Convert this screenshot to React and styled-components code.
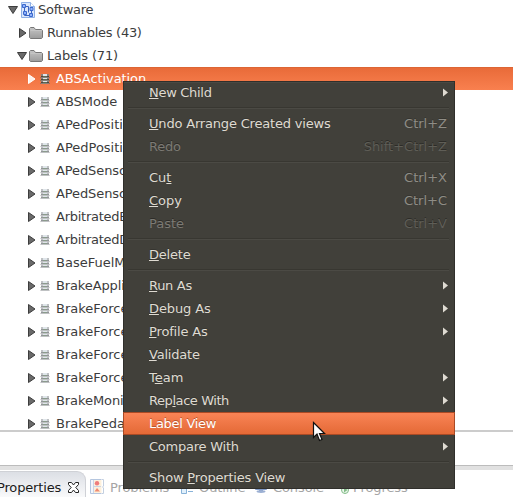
import React from 'react';
import styled, { createGlobalStyle } from 'styled-components';

const GlobalStyle = createGlobalStyle`
  body { margin: 0; background: #fff; overflow: hidden; }
  #root { font: 13px "DejaVu Sans", sans-serif; color: #3c3c3c; }
`;

const Workbench = styled.div`
  position: relative;
  width: 513px;
  height: 497px;
  overflow: hidden;
  display: flex;
  flex-direction: column;
`;

const Tree = styled.div`
  height: 430px;
  flex: none;
  overflow: hidden;
  border-bottom: 2px solid #cccccc;
`;

const TreeRow = styled.div`
  height: 23px;
  margin-top: ${(p) => (p.$first ? '-2px' : 0)};
  padding-left: ${(p) => p.$indent}px;
  display: flex;
  align-items: center;
  white-space: nowrap;
  color: ${(p) => (p.$selected ? '#fff' : '#3c3c3c')};
  background: ${(p) => (p.$selected ? 'linear-gradient(#e86a38, #f9804f)' : 'none')};
  box-shadow: ${(p) => (p.$selected ? 'inset 0 1px #dd6534' : 'none')};
  svg { flex: none; }
`;

const RowLabel = styled.span`
  margin-left: ${(p) => p.$gap}px;
  line-height: 23px;
  letter-spacing: ${(p) => p.$spacing || 0}px;
`;

const IconSlot = styled.span`
  display: flex;
  margin-left: ${(p) => p.$gap}px;
`;

const Blank = styled.div`
  height: 33px;
  flex: none;
`;

const TabFolder = styled.div`
  flex: 1;
  display: flex;
  border-top: 1px solid #bcbcbc;
  padding-top: 5px;
  background: linear-gradient(#e1e1e1 4px, #fff 4px);
`;

const ActiveTab = styled.div`
  width: 86px;
  height: 36px;
  flex: none;
  box-sizing: border-box;
  border: 1px solid #cfd1d6;
  border-width: 1px 1px 0 0;
  border-radius: 0 9px 0 0;
  background: linear-gradient(#dcdfe5, #ffffff 30px);
  color: #1a1a1a;
  display: flex;
  line-height: 32px;
`;

const ActiveTitle = styled.span`
  margin-left: -3px;
  width: 71px;
  letter-spacing: -0.15px;
`;

const CloseSlot = styled.span`
  padding-top: 10px;
  display: flex;
`;

const Tab = styled.div`
  width: ${(p) => p.$width}px;
  flex: none;
  display: flex;
  gap: ${(p) => p.$gap}px;
  padding-left: ${(p) => p.$pad}px;
  line-height: 33px;
  letter-spacing: -0.1px;
  color: #a5a5a5;
  box-sizing: border-box;
  svg { margin-top: 8px; flex: none; }
`;

const Menu = styled.div`
  position: absolute;
  left: 123px;
  top: 81px;
  width: 332px;
  height: 408px;
  background: #41403a;
  box-shadow: inset 0 0 0 1px #302f2b, inset 0 2px #4a4943;
  color: #dfdbd2;
`;

const MenuItem = styled.div`
  height: 23px;
  box-sizing: border-box;
  padding: 0 7px 0 26px;
  display: flex;
  align-items: center;
  justify-content: space-between;
  line-height: 23px;
  white-space: nowrap;
  color: ${(p) => (p.$disabled ? '#7c7a74' : p.$selected ? '#fff' : '#dfdbd2')};
  text-shadow: ${(p) => (p.$disabled ? '0 -1px #2d2c28' : p.$selected ? '0 -1px #b9562f' : '0 -1px #363530')};
  background: ${(p) => (p.$selected ? 'linear-gradient(#fa8557, #e36835)' : 'none')};
  box-shadow: ${(p) => (p.$selected ? 'inset 0 0 0 1px #aa4a25' : 'none')};
`;

const ItemText = styled.span`
  letter-spacing: ${(p) => p.$spacing || 0}px;
`;

const Shortcut = styled.span`
  margin-right: 1px;
  color: ${(p) => (p.$disabled ? '#5f5e57' : '#8f8d86')};
`;

const Mnemonic = styled.span`
  text-decoration: underline;
  text-decoration-thickness: 1px;
  text-underline-offset: 1px;
  text-decoration-skip-ink: none;
`;

const Separator = styled.div`
  height: 8px;
  margin: 0 6px 0 5px;
  box-sizing: border-box;
  padding-top: 3px;
  &::before {
    content: '';
    display: block;
    height: 1px;
    background: #383731;
    border-bottom: 1px solid #4b4a44;
  }
`;

const Pointer = styled.svg`
  position: absolute;
  left: 312px;
  top: 421px;
`;

const Arrow = ({ open, selected }) => (
  <svg width="12" height="12" viewBox="0 0 12 12">
    <path
      d={open ? 'M1.5 2.5H10.5L6 9.5Z' : 'M2.5 1.5V10.5L9 6Z'}
      fill={selected ? '#fff0e8' : '#6a6a6a'}
      stroke={selected ? '#fff' : '#3d3d3d'}
      strokeWidth="1"
    />
  </svg>
);

const FolderIcon = () => (
  <svg width="14" height="12" viewBox="0 0 14 12">
    <defs>
      <linearGradient id="folder" x2="0" y2="1">
        <stop stopColor="#c5c5c5" />
        <stop offset="1" stopColor="#9c9c9c" />
      </linearGradient>
    </defs>
    <path d="M.5 10.5V1.5L1.5.5H5L6.5 2.5H12.5L13.5 3.5V10.5L12.5 11.5H1.5Z" fill="url(#folder)" stroke="#777" />
    <path d="M1.5 3.5H12.5" stroke="#c4c4c4" />
  </svg>
);

const LabelIcon = ({ selected }) => (
  <svg width="10" height="10" viewBox="0 0 10 10" shapeRendering="crispEdges">
    <path d="M1 0H9V10H1Z" fill={selected ? '#8b8078' : '#bfc1c3'} />
    <path d="M3 0H7V2H3ZM3 4H7V5H3ZM3 7H7V8H3Z" fill="#dfe5ea" />
    <path d="M3 2H7V3H3ZM3 5H7V6H3ZM3 8H7V9H3Z" fill={selected ? '#5c6b52' : '#8b9c8c'} />
    <path d="M1 2H3V3H1ZM7 2H9V3H7ZM1 5H3V6H1ZM7 5H9V6H7ZM1 8H3V9H1ZM7 8H9V9H7Z" fill={selected ? '#4d4542' : '#93949a'} />
    <path d="M0 3H1V4H0ZM9 3H10V4H9ZM0 6H1V7H0ZM9 6H10V7H9ZM0 9H1V10H0ZM9 9H10V10H9Z" fill={selected ? '#a9694d' : '#dadada'} />
  </svg>
);

const SoftwareIcon = () => (
  <svg width="14" height="16" viewBox="0 0 14 16">
    <path d="M.5.5H9.5L13.5 4.5V15.5H.5Z" fill="#dbe7fb" stroke="#8fb0e6" />
    <path d="M9.5.5V4.5H13.5" fill="#fff" stroke="#8fb0e6" />
    <path d="M3.5 5V13.5H8M4 4.5H7.5V10.5M10.5 8V13" fill="none" stroke="#3a62c0" />
    <path d="M1.5 2.5H4.5V5.5H1.5ZM9 5.5H12V8.5H9ZM2.5 9.5H5.5V12.5H2.5ZM8.5 11.5H11.5V14.5H8.5Z" fill="#8fb2fa" stroke="#3c69cd" />
  </svg>
);

const CloseIcon = () => (
  <svg width="11" height="11" viewBox="0 0 11 11">
    <path d="M.5.5H3.5L5.5 3L7.5.5H10.5V2.5L7.8 5.5L10.5 8.5V10.5H7.5L5.5 8L3.5 10.5H.5V8.5L3.2 5.5L.5 2.5Z" fill="#fff" stroke="#222" />
  </svg>
);

const ProblemsIcon = () => (
  <svg width="14" height="15" viewBox="0 0 14 15">
    <path d="M.5.5H11V14.5H.5Z" fill="#f3f6fc" stroke="#b5c6df" />
    <path d="M4 1H12.5V14H4Z" fill="#fdf0dc" />
    <path d="M11.5.5H13.5V7L12.5 8L13.5 9V14.5H11.5" fill="#fff" stroke="#c3cfe0" />
    <path d="M3.5 1V14M4 7.5H11" stroke="#c9d5e6" />
    <circle cx="7" cy="4.3" r="2.2" fill="#ee7d7d" />
    <path d="M4.5 12.5L7 9L10 12.5Z" fill="#ef8a70" />
  </svg>
);

const OutlineIcon = () => (
  <svg width="14" height="15" viewBox="0 0 14 15">
    <path d="M1.5 9.5H6.5V14.5H1.5ZM1.5 1.5H6.5V6.5H1.5Z" fill="#e1f0fb" stroke="#88b2d8" />
    <path d="M8 12.5H13M8 4.5H13" stroke="#88b2d8" />
  </svg>
);

const ConsoleIcon = () => (
  <svg width="14" height="15" viewBox="0 0 14 15">
    <path d="M1.5 1.5H12.5V10.5H1.5Z" fill="#b4c5e4" stroke="#829bc8" />
    <path d="M5 10H9V12H5Z" fill="#829bc8" />
    <ellipse cx="7" cy="12.6" rx="4.5" ry="1.3" fill="#9cb0d3" />
  </svg>
);

const ProgressIcon = () => (
  <svg width="10" height="16" viewBox="0 0 10 16">
    <circle cx="5" cy="11" r="3.5" fill="#edf7ed" stroke="#84bd8a" />
    <path d="M4 8.5V13.5L7.5 11Z" fill="#84bd8a" />
  </svg>
);

const SubmenuArrow = () => (
  <svg width="5" height="9" viewBox="0 0 5 9">
    <path d="M0 .5V8.5L5 4.5Z" fill="#dfdbd2" />
  </svg>
);

const labels = [
  ['ABSActivation', -0.08], ['ABSMode'], ['APedPosition'], ['APedPosition'], ['APedSensor', -0.1],
  ['APedSensor', -0.1], ['ArbitratedBrake', -0.25], ['ArbitratedDiff', -0.25], ['BaseFuelMass'],
  ['BrakeApplication', -0.12], ['BrakeForce'], ['BrakeForce'], ['BrakeForce'], ['BrakeForce'],
  ['BrakeMonitor', -0.08], ['BrakePedal'],
];

// An underscore marks the mnemonic letter; null is a separator.
const menu = [
  { text: '_New Child', sub: true, spacing: -0.3 }, null,
  { text: '_Undo Arrange Created views', keys: 'Ctrl+Z', spacing: -0.18 },
  { text: 'Redo', keys: 'Shift+Ctrl+Z', disabled: true, spacing: -0.2 }, null,
  { text: 'Cu_t', keys: 'Ctrl+X' },
  { text: '_Copy', keys: 'Ctrl+C' },
  { text: 'Paste', keys: 'Ctrl+V', disabled: true }, null,
  { text: '_Delete', spacing: -0.2 }, null,
  { text: '_Run As', sub: true, spacing: -0.3 },
  { text: '_Debug As', sub: true, spacing: -0.12 },
  { text: '_Profile As', sub: true, spacing: -0.15 },
  { text: '_Validate', spacing: -0.2 },
  { text: 'T_eam', sub: true },
  { text: 'Rep_lace With', sub: true, spacing: -0.43 },
  { text: 'Label View', selected: true, spacing: -0.3 },
  { text: 'Compare With', sub: true, spacing: -0.24 }, null,
  { text: 'Show _Properties View', spacing: -0.18 },
];

const MenuText = ({ text, spacing }) => {
  const at = text.indexOf('_');
  if (at < 0) return <ItemText $spacing={spacing}>{text}</ItemText>;
  return (
    <ItemText $spacing={spacing}>
      {text.slice(0, at)}
      <Mnemonic>{text[at + 1]}</Mnemonic>
      {text.slice(at + 2)}
    </ItemText>
  );
};

export default function App() {
  return (
    <>
      <GlobalStyle />
      <Workbench>
        <Tree>
          <TreeRow $first $indent={7}>
            <Arrow open />
            <IconSlot $gap={2}><SoftwareIcon /></IconSlot>
            <RowLabel $gap={3} $spacing={-0.25}>Software</RowLabel>
          </TreeRow>
          <TreeRow $indent={17}>
            <Arrow />
            <IconSlot $gap={0}><FolderIcon /></IconSlot>
            <RowLabel $gap={4} $spacing={-0.28}>Runnables (43)</RowLabel>
          </TreeRow>
          <TreeRow $indent={16}>
            <Arrow open />
            <IconSlot $gap={1}><FolderIcon /></IconSlot>
            <RowLabel $gap={4} $spacing={-0.15}>Labels (71)</RowLabel>
          </TreeRow>
          {labels.map(([name, spacing], i) => (
            <TreeRow key={i} $indent={26} $selected={i === 0}>
              <Arrow selected={i === 0} />
              <IconSlot $gap={2}><LabelIcon selected={i === 0} /></IconSlot>
              <RowLabel $gap={6} $spacing={spacing}>{name}</RowLabel>
            </TreeRow>
          ))}
        </Tree>
        <Blank />
        <TabFolder>
          <ActiveTab>
            <ActiveTitle>Properties</ActiveTitle>
            <CloseSlot><CloseIcon /></CloseSlot>
          </ActiveTab>
          <Tab $width={93} $pad={4} $gap={6}><ProblemsIcon />Problems</Tab>
          <Tab $width={75} $pad={1} $gap={5}><OutlineIcon />Outline</Tab>
          <Tab $width={86} $pad={0} $gap={5}><ConsoleIcon />Console</Tab>
          <Tab $width={100} $pad={0} $gap={3}><ProgressIcon />Progress</Tab>
        </TabFolder>
        <Menu>
          {menu.map((item, i) =>
            item ? (
              <MenuItem key={i} $disabled={item.disabled} $selected={item.selected}>
                <MenuText text={item.text} spacing={item.spacing} />
                {item.keys && <Shortcut $disabled={item.disabled}>{item.keys}</Shortcut>}
                {item.sub && <SubmenuArrow />}
              </MenuItem>
            ) : (
              <Separator key={i} />
            )
          )}
        </Menu>
        <Pointer width="14" height="22" viewBox="0 0 14 22">
          <path d="M1.5 1.5V16.5L5 13L7.5 19.5L10 18.5L7.5 12.5H12.5Z" fill="#fff" stroke="#111" strokeWidth="1.2" />
        </Pointer>
      </Workbench>
    </>
  );
}
